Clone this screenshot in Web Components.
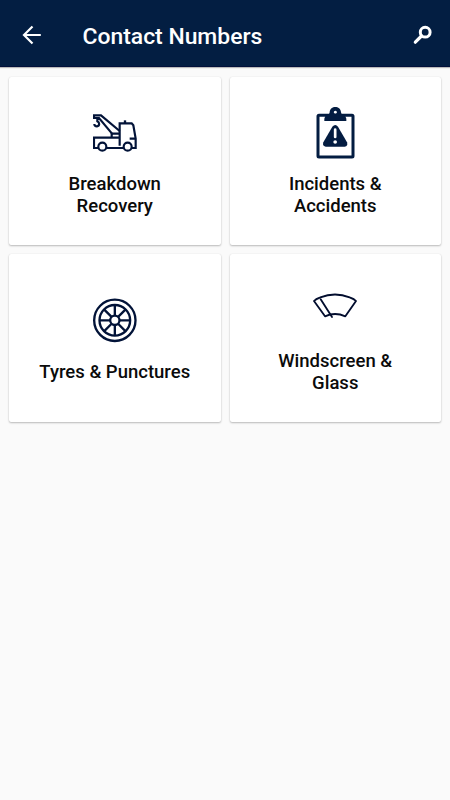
<!DOCTYPE html>
<html lang="en">
<head>
<meta charset="utf-8">
<meta name="viewport" content="width=device-width, initial-scale=1">
<title>Contact Numbers</title>
<style>
  body {
    margin: 0;
    min-height: 100vh;
    background: #fafafa;
    font-family: Roboto, "Liberation Sans", sans-serif;
  }
</style>
</head>
<body>
<app-bar>Contact Numbers</app-bar>
<contact-grid>
  <contact-card data-icon="truck">Breakdown Recovery</contact-card>
  <contact-card data-icon="clipboard">Incidents &amp; Accidents</contact-card>
  <contact-card data-icon="wheel">Tyres &amp; Punctures</contact-card>
  <contact-card data-icon="wiper">Windscreen &amp; Glass</contact-card>
</contact-grid>

<script>
// each icon sits in a 44x52 box, drawn at three units per pixel
const icons = {
  truck: `
    <svg viewBox="24 6 132 156" fill="none" stroke="#021338" stroke-width="6.500">
      <path d="M41 129H27V98H103M64 129H117M140 129H152V101L145 61L140 55H104V122"/>
      <path d="M120 55V46" stroke-width="7"/>
      <path d="M104 78L48 31H27V39H42L83 88M37 40V49C45 53 44 63 36 64C31 64 28 61 28 57"/>
      <path d="M80 97V86H103M134 101H151"/>
      <circle cx="52" cy="125" r="12"/>
      <circle cx="128" cy="125" r="12"/>
    </svg>`,
  clipboard: `
    <svg viewBox="24 21 132 156" fill="#031c41">
      <rect x="39" y="46" width="105" height="125" rx="3" fill="none" stroke="#031c41" stroke-width="9"/>
      <path fill-rule="evenodd" d="M58 63V56Q59 47 67 45Q74 44 74 37C75 16 107 16 108 37Q108 44 115 45Q123 47 124 56V63ZM91 32a4.500 4.500 0 1 0 .1 0Z"/>
      <path d="M82 80Q91 70 99 80L126 127Q130 139 119 140H62Q51 138 55 127Z"/>
      <path d="M90.500 89V111" stroke="#fff" stroke-width="8" stroke-linecap="round"/>
      <circle cx="90.500" cy="126" r="5.500" fill="#fff"/>
    </svg>`,
  wheel: `
    <svg viewBox="24 15 132 156" fill="none" stroke="#021338" stroke-width="7">
      <circle cx="89.500" cy="91" r="62"/>
      <circle cx="89.500" cy="91" r="46"/>
      <circle cx="89.500" cy="91" r="14"/>
      <path d="M89.500 45V76M89.500 106V137M43 91H75M104 91H136M57 58L79 80M100 102L122 124M122 58L100 80M79 102L57 124"/>
    </svg>`,
  wiper: `
    <svg viewBox="24 -3 132 156" fill="none" stroke="#020d2e" stroke-width="5.500" stroke-linejoin="round" stroke-linecap="round">
      <path d="M27 48Q32 42 46 37Q90 20 134 37Q148 42 153 48L121 94Q90 80 60 94Z"/>
      <path d="M47 43L81 96"/>
    </svg>`
};

const barTemplate = document.createElement("template");
barTemplate.innerHTML = `
<style>
  :host {
    display: flex;
    align-items: center;
    box-sizing: border-box;
    height: 67px;
    padding: 3px 17px 0 20px;
    background: #031e42;
    border-bottom: 1px solid #02103a;
    box-shadow: 0 1px 1px rgba(0, 0, 0, .25);
    color: #fff;
  }
  h1 {
    flex: 1;
    margin: 5px 0 0 38.500px;
    font-size: 22.900px;
    font-weight: 500;
    line-height: 28px;
    white-space: nowrap;
  }
  svg {
    display: block;
    flex: none;
  }
</style>
<svg class="back" width="24" height="24" viewBox="0 0 24 24" fill="none" stroke="#fff" stroke-width="2.200">
  <path d="M20.800 12H3.500M12.500 3.500L4 12L12.500 20.500"/>
</svg>
<h1><slot></slot></h1>
<svg class="search" width="20" height="20" viewBox="0 0 20 20" fill="none" stroke="#fff">
  <circle cx="12.200" cy="7.200" r="4.900" stroke-width="3"/>
  <path d="M8.500 11L2.300 17.200" stroke-width="3.200" stroke-linecap="round"/>
</svg>
`;

class AppBar extends HTMLElement {
  constructor() {
    super();
    this.attachShadow({ mode: "open" });
    this.shadowRoot.appendChild(barTemplate.content.cloneNode(true));
  }
}

const gridTemplate = document.createElement("template");
gridTemplate.innerHTML = `
<style>
  :host {
    display: grid;
    grid-template-columns: 1fr 1fr;
    grid-auto-rows: 168px;
    gap: 9px;
    padding: 10px 9px;
  }
</style>
<slot></slot>
`;

class ContactGrid extends HTMLElement {
  constructor() {
    super();
    this.attachShadow({ mode: "open" });
    this.shadowRoot.appendChild(gridTemplate.content.cloneNode(true));
  }
}

const cardTemplate = document.createElement("template");
cardTemplate.innerHTML = `
<style>
  :host {
    display: flex;
    flex-direction: column;
    align-items: center;
    justify-content: center;
    gap: 14px;
    box-sizing: border-box;
    padding-top: 2px;
    background: #fff;
    border-radius: 2px;
    box-shadow: 0 1px 2px rgba(0, 0, 0, .25), 0 0 1px rgba(0, 0, 0, .12);
    color: #0b0b0b;
  }
  .icon svg {
    display: block;
    width: 44px;
    height: 52px;
  }
  .label {
    max-width: 156px;
    font-size: 18.500px;
    font-weight: 500;
    line-height: 22px;
    text-align: center;
  }
</style>
<div class="icon"></div>
<div class="label"><slot></slot></div>
`;

class ContactCard extends HTMLElement {
  constructor() {
    super();
    this.attachShadow({ mode: "open" });
    this.shadowRoot.appendChild(cardTemplate.content.cloneNode(true));
  }

  connectedCallback() {
    this.render();
  }

  render() {
    const icon = this.getAttribute("data-icon");
    this.shadowRoot.querySelector(".icon").innerHTML = icons[icon] || "";
  }
}

customElements.define("app-bar", AppBar);
customElements.define("contact-grid", ContactGrid);
customElements.define("contact-card", ContactCard);
</script>
</body>
</html>
